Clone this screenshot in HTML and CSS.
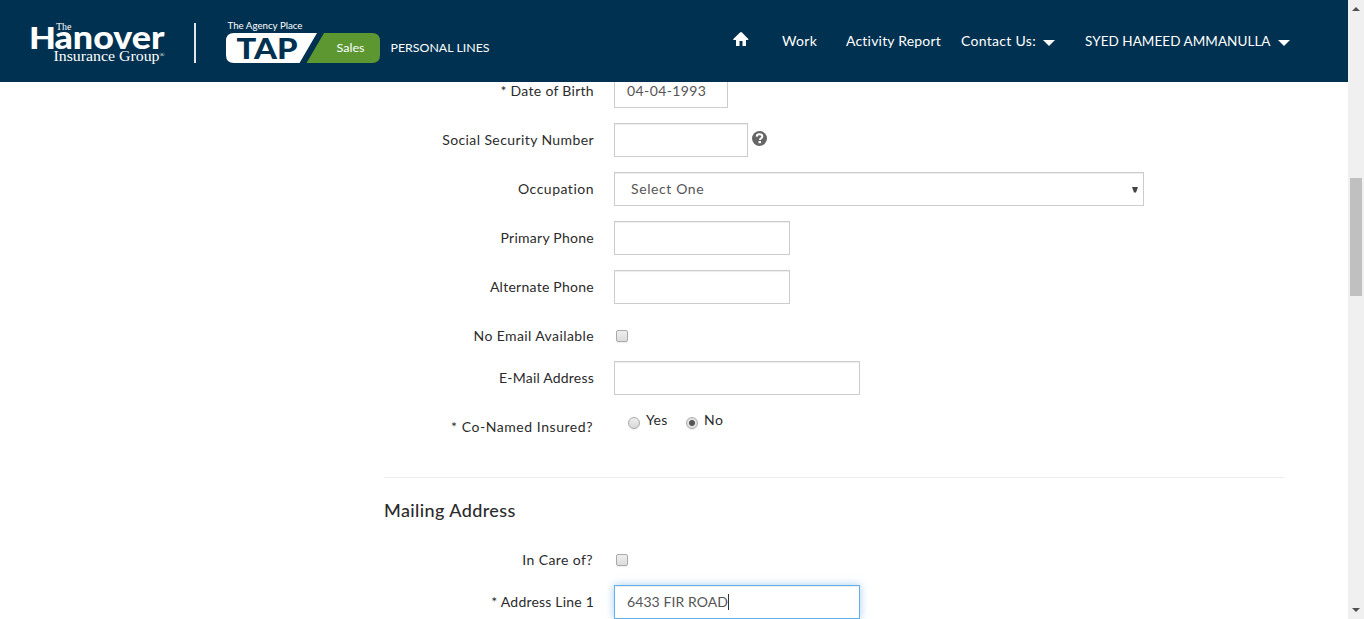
FILE: index.html
```
<!DOCTYPE html>
<html lang="en">
<head>
<meta charset="utf-8">
<title>TAP Sales - Personal Lines</title>
<link rel="stylesheet" href="styles.css">
</head>
<body>
<div class="page">
  <header class="topbar">
    <svg class="brand" width="500" height="82" viewBox="0 0 500 82" role="img">
      <g fill="#fff">
        <text class="serif" x="56" y="29.500" font-size="9.500" textLength="15.500" lengthAdjust="spacingAndGlyphs">The</text>
        <text class="brand-name" x="29" y="49" font-size="31" textLength="27" lengthAdjust="spacingAndGlyphs">H</text>
        <text class="brand-name" x="54.500" y="49.300" font-size="33" textLength="110" lengthAdjust="spacingAndGlyphs">anover</text>
        <text class="serif" x="53.500" y="60.500" font-size="15" textLength="106" lengthAdjust="spacingAndGlyphs">Insurance Group</text>
        <text class="serif" x="159.500" y="57" font-size="6.500">®</text>
        <rect x="194" y="23" width="2" height="40" fill="#dfe6eb"/>
        <text class="sans" x="227.500" y="29" font-size="9" textLength="75" lengthAdjust="spacingAndGlyphs">The Agency Place</text>
        <path d="M234 33H317L299.500 63H234Q226 63 226 55V41Q226 33 234 33Z"/>
      </g>
      <path d="M324 33H372Q380 33 380 41V55Q380 63 372 63H306.500Z" fill="#5c9732"/>
      <text class="tap" x="236.500" y="58.800" font-size="28.500" textLength="61" lengthAdjust="spacingAndGlyphs" fill="#003150">TAP</text>
      <text class="sans" x="336.500" y="52" font-size="11.500" textLength="28" lengthAdjust="spacingAndGlyphs" fill="#fff">Sales</text>
      <text class="sans" x="390.500" y="52" font-size="12" textLength="99" lengthAdjust="spacingAndGlyphs" fill="#fff">PERSONAL LINES</text>
    </svg>
    <nav class="menu">
      <a class="home"><svg width="16" height="16" viewBox="0 0 16 16"><path d="M7 1.500Q8 .7 9 1.500L15.300 8V9H13V15H9.500V10H6.500V15H3V9H.3V8Z" fill="#fff"/></svg></a>
      <a class="work">Work</a>
      <a class="activity">Activity Report</a>
      <a class="contact">Contact Us:<svg class="caret" width="12" height="6"><path d="M0 0H12L6 6Z"/></svg></a>
      <a class="user">SYED HAMEED AMMANULLA<svg class="caret" width="12" height="6"><path d="M0 0H12L6 6Z"/></svg></a>
    </nav>
  </header>
  <main class="content">
    <div class="row first"><label class="dob">* Date of Birth</label><div class="field date">04-04-1993</div></div>
    <div class="row"><label class="ssn-label">Social Security Number</label><div class="group"><div class="field ssn"></div>
      <svg class="help" width="15" height="15" viewBox="0 0 15 15"><circle cx="7.500" cy="7.500" r="7.500" fill="#666"/><path d="M4.700 5.600Q4.800 3.300 7.500 3.300Q10.300 3.300 10.300 5.500Q10.300 6.700 9 7.400Q8 8 8 9" fill="none" stroke="#fff" stroke-width="2"/><rect x="6.500" y="10" width="2.500" height="2.200" fill="#fff"/></svg></div></div>
    <div class="row"><label class="occ">Occupation</label><div class="field select"><span>Select One</span><svg width="6" height="6"><path d="M0 0H6L4 5.500H2Z" fill="#444"/></svg></div></div>
    <div class="row"><label class="primary">Primary Phone</label><div class="field phone"></div></div>
    <div class="row"><label class="alternate">Alternate Phone</label><div class="field phone"></div></div>
    <div class="row short"><label class="noemail">No Email Available</label><span class="check"></span></div>
    <div class="row"><label class="email">E-Mail Address</label><div class="field wide"></div></div>
    <div class="row"><label class="conamed">* Co-Named Insured?</label><div class="radios"><span class="radio"></span><span class="yes">Yes</span><span class="radio on"></span><span class="no">No</span></div></div>
    <hr>
    <h2>Mailing Address</h2>
    <div class="row short"><label class="care">In Care of?</label><span class="check"></span></div>
    <div class="row"><label class="line1">* Address Line 1</label><div class="field wide focus"><span class="address">6433 FIR ROAD</span><i class="cursor"></i></div></div>
  </main>
</div>
<div class="scrollbar">
  <svg width="8" height="4"><path d="M0 4L4 0L8 4Z"/></svg>
  <div class="thumb"></div>
  <svg class="down" width="8" height="4"><path d="M0 0H8L4 4Z"/></svg>
</div>
</body>
</html>
```
FILE: styles.css
```
* { box-sizing: border-box; }
body { margin: 0; height: 619px; display: flex; overflow: hidden; background: #fff; color: #2b2b2b; font: 14px/20px Lato, "Open Sans", sans-serif; }
.page { width: 1348px; height: 619px; display: flex; flex-direction: column; }
.topbar { height: 82px; flex: none; background: #003150; display: flex; justify-content: space-between; }
.brand { flex: none; }
.serif { font-family: "Liberation Serif", serif; }
.brand-name, .tap { font-family: Lato, sans-serif; font-weight: 900; }
.sans { font-family: Lato, sans-serif; }
.menu { display: flex; padding-top: 31px; color: #fff; width: 615px; }
.menu a { display: flex; flex: none; white-space: nowrap; }
.home { width: 49px; }
.work { width: 64px; letter-spacing: .3px; }
.activity { width: 115px; letter-spacing: .2px; }
.contact { width: 124px; letter-spacing: .3px; }
.user { font-size: 13.5px; letter-spacing: .05px; }
.caret { fill: #fff; margin: 9px 0 0 7px; }
.content { flex: 1; overflow: hidden; }
.row { display: grid; grid-template-columns: 594px 1fr; column-gap: 20px; height: 34px; margin-bottom: 15px; }
.row.first { margin-top: -8px; }
.row.short { height: 27px; }
label { padding-top: 7px; text-align: right; letter-spacing: .5px; }
.dob { letter-spacing: .3px; }
.ssn-label, .noemail { letter-spacing: .4px; }
.primary, .alternate { letter-spacing: .26px; }
.email, .line1 { letter-spacing: .2px; }
.conamed { letter-spacing: .55px; padding-right: 1px; }
.care { letter-spacing: .4px; padding-right: 1px; }
.field { height: 34px; border: 1px solid #ccc; box-shadow: inset 0 1px 1px rgba(0,0,0,.075); color: #555; padding: 6px 12px; letter-spacing: .6px; }
.date { width: 114px; letter-spacing: .4px; }
.ssn { width: 134px; }
.phone { width: 176px; }
.wide { width: 246px; }
.select { width: 530px; display: flex; justify-content: space-between; padding: 6px 5px 6px 16px; }
.select svg { margin-top: 8px; }
.group { display: flex; gap: 4px; }
.help { margin-top: 8px; }
.check { width: 12px; height: 12px; margin: 11px 0 0 2px; border: 1px solid #aaa; border-radius: 2px; background: linear-gradient(#eee, #dcdcdc); box-shadow: 0 1px 1px #eee; }
.radios { display: flex; padding-left: 14px; }
.radio { width: 12px; height: 12px; margin-top: 7px; border: 1px solid #aaa; border-radius: 50%; background: linear-gradient(#eee, #d8d8d8); box-shadow: 0 1px 1px #eee; }
.radio.on { background: radial-gradient(circle, #555 0 2.500px, #e2e2e2 3.500px); }
.yes { width: 46px; padding-left: 6px; letter-spacing: .3px; }
.no { padding-left: 6px; letter-spacing: .5px; }
hr { width: 900px; height: 1px; margin: 33px 0 22px 384px; border: 0; background: #eee; }
h2 { margin: 0 0 23px 384px; font-size: 18px; font-weight: 500; line-height: 20px; letter-spacing: .4px; }
.focus { display: flex; border-color: #66afe9; box-shadow: inset 0 1px 1px rgba(0,0,0,.075), 0 0 8px rgba(102,175,233,.6); }
.address { white-space: nowrap; letter-spacing: .08px; }
.cursor { width: 1px; height: 16px; margin-top: 2px; background: #333; }
.scrollbar { width: 16px; height: 619px; background: #f0f0f0; display: flex; flex-direction: column; padding: 7px 2px; }
.scrollbar svg { margin-left: 2px; fill: #505050; flex: none; }
.thumb { height: 118px; margin-top: 167px; background: #c0c0c0; }
.scrollbar .down { margin-top: auto; }
```
